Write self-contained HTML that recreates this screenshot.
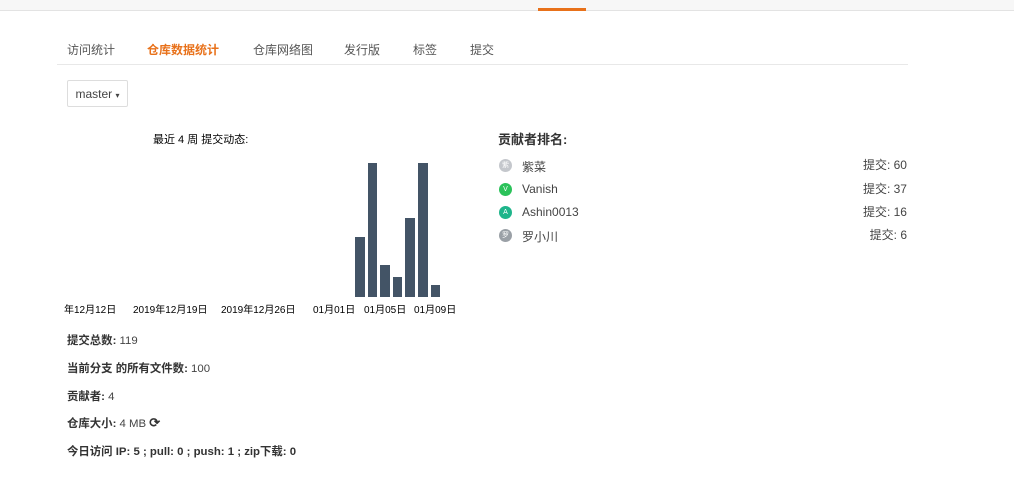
<!DOCTYPE html>
<html><head><meta charset="utf-8"><style>
body{margin:0;width:1014px;height:483px;background:#fff;font-family:"Liberation Sans","Noto Sans CJK SC",sans-serif;color:#333;position:relative;overflow:hidden}
.a{position:absolute;white-space:nowrap}
.top{position:absolute;left:0;top:0;width:1014px;height:10px;background:#f7f7f7;border-bottom:1px solid #e3e3e3}
.tab{font-size:12px;color:#555;top:41px}
.bar{position:absolute;background:#435466;bottom:186px;width:9.5px}
.ax{font-size:10px;color:#000;top:301px}
.lbl{font-size:11.4px;color:#444}
.lbl b{color:#333}
.av{position:absolute;width:13px;height:13px;border-radius:50%;left:499px;color:#fff;font-size:7px;text-align:center;line-height:13px}
.nm{font-size:12px;color:#444;left:522px}
.ct{font-size:12px;color:#444;right:107px}
</style></head><body>
<div class="top"></div>
<div class="a" style="left:538px;top:8px;width:48px;height:3px;background:#e8711a"></div>
<div class="a tab" style="left:67px">访问统计</div>
<div class="a tab" style="left:147px;color:#e8711a;font-weight:bold">仓库数据统计</div>
<div class="a tab" style="left:253px">仓库网络图</div>
<div class="a tab" style="left:344px">发行版</div>
<div class="a tab" style="left:413px">标签</div>
<div class="a tab" style="left:470px">提交</div>
<div class="a" style="left:57px;top:64px;width:851px;height:1px;background:#e8e8e8"></div>
<div class="a" style="left:67px;top:80px;width:59px;height:25px;border:1px solid #ddd;border-radius:2px;font-size:12px;line-height:26px;text-align:center;color:#444">master <span style="font-size:8px">▾</span></div>
<div class="a" style="left:153px;top:131px;font-size:11px;color:#000">最近 4 周 提交动态:</div>
<div class="bar" style="left:355px;height:60px"></div>
<div class="bar" style="left:367.5px;height:134px"></div>
<div class="bar" style="left:380px;height:32px"></div>
<div class="bar" style="left:392.5px;height:20px"></div>
<div class="bar" style="left:405px;height:79px"></div>
<div class="bar" style="left:418px;height:134px"></div>
<div class="bar" style="left:430.5px;height:12px"></div>
<div class="a ax" style="left:64px">年12月12日</div>
<div class="a ax" style="left:133px">2019年12月19日</div>
<div class="a ax" style="left:221px">2019年12月26日</div>
<div class="a ax" style="left:313px">01月01日</div>
<div class="a ax" style="left:364px">01月05日</div>
<div class="a ax" style="left:414px">01月09日</div>
<div class="a" style="left:498px;top:129px;font-size:13px;font-weight:bold;color:#333">贡献者排名:</div>
<div class="av" style="top:159px;background:#c4c7cc">紫</div><div class="a nm" style="top:158px">紫菜</div><div class="a ct" style="top:156px">提交: 60</div>
<div class="av" style="top:183px;background:#2bc25a">V</div><div class="a nm" style="top:182px">Vanish</div><div class="a ct" style="top:180px">提交: 37</div>
<div class="av" style="top:206px;background:#1fb58b">A</div><div class="a nm" style="top:205px">Ashin0013</div><div class="a ct" style="top:203px">提交: 16</div>
<div class="av" style="top:229px;background:#9aa0a6">罗</div><div class="a nm" style="top:228px">罗小川</div><div class="a ct" style="top:226px">提交: 6</div>
<div class="a lbl" style="left:67px;top:332px"><b>提交总数:</b> 119</div>
<div class="a lbl" style="left:67px;top:360px"><b>当前分支 的所有文件数:</b> 100</div>
<div class="a lbl" style="left:67px;top:388px"><b>贡献者:</b> 4</div>
<div class="a lbl" style="left:67px;top:415px"><b>仓库大小:</b> 4 MB <b style="font-size:13px">⟳</b></div>
<div class="a lbl" style="left:67px;top:443px"><b>今日访问 IP: 5 ; pull: 0 ; push: 1 ; zip下载: 0</b></div>
</body></html>
